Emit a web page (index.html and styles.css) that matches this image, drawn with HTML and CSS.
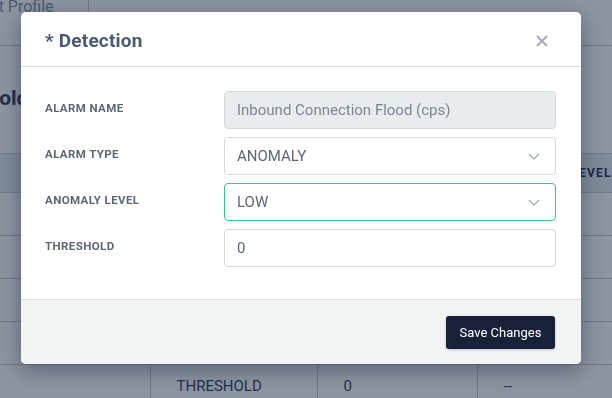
FILE: index.html
```html
<!DOCTYPE html>
<html lang="en">
<head>
    <meta charset="UTF-8">
    <title>Detection</title>
    <link rel="stylesheet" href="styles.css">
</head>
<body>
    <div class="page">
        <div class="tabs">
            <a class="tab">Alert Profile</a>
        </div>
        <h3 class="section-title">Threshold</h3>
        <div class="toolbar"></div>
        <table class="grid">
            <thead>
                <tr>
                    <th class="col-a">NAME</th>
                    <th class="col-b">TYPE</th>
                    <th class="col-c">VALUE</th>
                    <th class="col-d">ANOMALY LEVEL</th>
                </tr>
            </thead>
            <tbody>
                <tr><td></td><td>ANOMALY</td><td>LOW</td><td>--</td></tr>
                <tr><td></td><td>ANOMALY</td><td>LOW</td><td>--</td></tr>
                <tr><td></td><td>ANOMALY</td><td>LOW</td><td>--</td></tr>
                <tr><td></td><td>ANOMALY</td><td>LOW</td><td>--</td></tr>
                <tr class="bordered"><td></td><td>THRESHOLD</td><td>0</td><td>--</td></tr>
            </tbody>
        </table>
    </div>

    <div class="backdrop"></div>

    <div class="modal">
        <div class="modal-header">
            <h2>* Detection</h2>
            <button class="close" type="button">
                <svg width="12" height="12" viewBox="0 0 12 12">
                    <path d="M1 1 L11 11 M11 1 L1 11" stroke="#a3abb4" stroke-width="2" fill="none"/>
                </svg>
            </button>
        </div>
        <div class="modal-body">
            <div class="form-row">
                <label>ALARM NAME</label>
                <div class="field disabled">Inbound Connection Flood (cps)</div>
            </div>
            <div class="form-row">
                <label>ALARM TYPE</label>
                <div class="field select">
                    <span>ANOMALY</span>
                    <svg width="12" height="7" viewBox="0 0 12 7"><path d="M1 1 L6 6 L11 1" stroke="#9da5ae" stroke-width="1.2" fill="none"/></svg>
                </div>
            </div>
            <div class="form-row">
                <label>ANOMALY LEVEL</label>
                <div class="field select focus">
                    <span>LOW</span>
                    <svg width="12" height="7" viewBox="0 0 12 7"><path d="M1 1 L6 6 L11 1" stroke="#9da5ae" stroke-width="1.2" fill="none"/></svg>
                </div>
            </div>
            <div class="form-row">
                <label>THRESHOLD</label>
                <div class="field">0</div>
            </div>
        </div>
        <div class="modal-footer">
            <button class="btn-save" type="button">Save Changes</button>
        </div>
    </div>
</body>
</html>
```

FILE: styles.css
```css
body {
    margin: 0;
    font-family: Roboto, "Noto Sans", sans-serif;
    background-color: #fff;
    overflow: hidden;
    height: 398px;
}
.page {
    margin-top: -30px;
    margin-left: -80px;
    width: 740px;
}
.tabs {
    height: 75px;
    border-bottom: 1px solid #c6cbd2;
    display: flex;
}
.tab {
    padding: 27px 34px 0 50px;
    font-size: 16px;
    color: #8593a3;
    border-right: 1px solid #c6cbd2;
}
.section-title {
    margin: 0;
    padding: 40px 0 0 13px;
    height: 44px;
    font-size: 21px;
    color: #34425a;
}
.toolbar {
    height: 23px;
}
.grid {
    border-collapse: collapse;
    width: 100%;
}
.grid th {
    height: 38px;
    background-color: #e4eaef;
    border-top: 1px solid #c6cbd2;
    border-bottom: 1px solid #c6cbd2;
    text-align: left;
    padding: 0 0 0 26px;
    font-size: 12px;
    letter-spacing: 1.2px;
    color: #27354a;
}
.grid td {
    height: 42px;
    border-bottom: 1px solid #c6cbd2;
    padding: 0 0 0 26px;
    font-size: 15px;
    color: #34425a;
}
.grid .bordered td + td {
    border-left: 1px solid #c6cbd2;
}
.col-a { width: 204px; }
.col-b { width: 141px; }
.col-c { width: 134px; }
.backdrop {
    position: fixed;
    inset: 0;
    background-color: rgba(17, 34, 60, 0.48);
}
.modal {
    position: absolute;
    top: 12px;
    left: 21px;
    width: 560px;
    background-color: #fff;
    border-radius: 5px;
    box-shadow: 0 6px 22px rgba(10, 20, 40, 0.4);
    overflow: hidden;
}
.modal-header {
    border-bottom: 1px solid #d8d7e2;
    display: flex;
    align-items: center;
    justify-content: space-between;
    padding: 3px 24px 0 24px;
    box-sizing: border-box;
    height: 55px;
}
.modal-header h2 {
    margin: 0;
    font-size: 19px;
    font-weight: bold;
    color: #4a5a70;
    letter-spacing: 0.2px;
}
.close {
    border: none;
    background: none;
    padding: 0;
    margin-right: 9px;
    width: 12px;
    height: 12px;
    display: flex;
}
.modal-body {
    padding: 24px 25px 32px 24px;
    display: flex;
    flex-direction: column;
    gap: 8px;
}
.form-row {
    display: flex;
    align-items: center;
}
.form-row label {
    width: 179px;
    font-size: 11.5px;
    font-weight: bold;
    color: #5b6676;
    letter-spacing: 0.4px;
    margin-top: -4px;
}
.field {
    flex: 1;
    height: 38px;
    box-sizing: border-box;
    border: 1px solid #d5d9de;
    border-radius: 4px;
    padding: 0 12px;
    display: flex;
    align-items: center;
    font-size: 15px;
    color: #5a6677;
}
.field.disabled {
    background-color: #e9ecef;
    color: #7d8793;
}
.field.select {
    justify-content: space-between;
    padding-right: 15px;
}
.field.focus {
    border-color: #2fc7a0;
}
.modal-footer {
    height: 64px;
    border-top: 1px solid #dcdde0;
    background-color: #f2f3f3;
    display: flex;
    align-items: center;
    justify-content: flex-end;
    padding-right: 26px;
}
.btn-save {
    height: 33px;
    width: 109px;
    border: none;
    border-radius: 3px;
    background-color: #19213a;
    color: #fff;
    font-family: Roboto, "Noto Sans", sans-serif;
    font-size: 13px;
    box-shadow: 0 1px 3px rgba(0, 0, 0, 0.2);
}
```
